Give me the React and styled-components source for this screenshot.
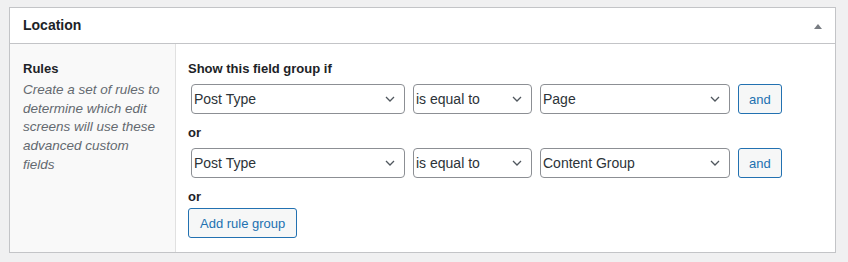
import React from "react";
import styled, { createGlobalStyle } from "styled-components";

const GlobalStyle = createGlobalStyle`
  body {
    margin: 0;
    background: #f0f0f1;
    font-family: "Liberation Sans", Arial, sans-serif;
    color: #1d2327;
  }
`;

const Page = styled.div`
  padding: 7px 12px 9px 9px;
`;

const Postbox = styled.div`
  background: #fff;
  border: 1px solid #c3c4c7;
`;

const PostboxHeader = styled.div`
  display: flex;
  align-items: center;
  justify-content: space-between;
  padding: 8px 13px 8px 13px;
  border-bottom: 1px solid #c3c4c7;
`;

const Title = styled.h2`
  margin: 0;
  font-size: 14px;
  line-height: 19px;
  font-weight: 700;
  color: #1d2327;
`;

const Toggle = styled.span`
  width: 0;
  height: 0;
  border-left: 4px solid transparent;
  border-right: 4px solid transparent;
  border-bottom: 5px solid #787c82;
  margin-top: 1px;
`;

const Body = styled.div`
  display: flex;
`;

const LabelCol = styled.div`
  width: 138px;
  flex: none;
  padding: 15px 14px 15px 13px;
  background: #f9f9f9;
  border-right: 1px solid #e1e1e1;
`;

const LabelTitle = styled.div`
  font-size: 13px;
  line-height: 20px;
  font-weight: 700;
`;

const Description = styled.p`
  margin: 2px 0 0;
  font-size: 13.5px;
  line-height: 18.7px;
  font-style: italic;
  color: #646970;
`;

const InputCol = styled.div`
  flex: 1;
  padding: 15px 12px 14px 12px;
`;

const Heading = styled.h4`
  margin: 0;
  font-size: 13px;
  line-height: 20px;
  font-weight: 700;
  color: #1d2327;
`;

const RuleRow = styled.div`
  display: flex;
  gap: 8px;
  margin: 5px 0 9px 3px;
`;

const Select = styled.div`
  box-sizing: border-box;
  display: flex;
  align-items: center;
  justify-content: space-between;
  width: ${(p) => p.$w}px;
  height: 30px;
  padding: 0 9px 0 2px;
  border: 1px solid #8c8f94;
  border-radius: 4px;
  background: #fff;
  font-size: 14px;
  color: #2c3338;
`;

const Button = styled.button`
  box-sizing: border-box;
  height: 30px;
  padding: 0 ${(p) => (p.$wide ? 11 : 10)}px;
  margin-top: ${(p) => (p.$wide ? 1 : 0)}px;
  border: 1px solid #2271b1;
  border-radius: 3px;
  background: #f6f7f7;
  color: #2271b1;
  font-family: "Liberation Sans", Arial, sans-serif;
  font-size: 13px;
  cursor: pointer;
`;

const Chevron = () => (
  <svg width="10" height="6" viewBox="0 0 10 6">
    <path d="M1 1l4 4 4-4" fill="none" stroke="#50575e" strokeWidth="1.3" />
  </svg>
);

const rules = [
  ["Post Type", "is equal to", "Page"],
  ["Post Type", "is equal to", "Content Group"],
];

function Rule({ values }) {
  const widths = [214, 119, 190];
  return (
    <RuleRow>
      {values.map((v, i) => (
        <Select key={i} $w={widths[i]}>
          <span>{v}</span>
          <Chevron />
        </Select>
      ))}
      <Button>and</Button>
    </RuleRow>
  );
}

export default function App() {
  return (
    <Page>
      <GlobalStyle />
      <Postbox>
        <PostboxHeader>
          <Title>Location</Title>
          <Toggle />
        </PostboxHeader>
        <Body>
          <LabelCol>
            <LabelTitle>Rules</LabelTitle>
            <Description>
              Create a set of rules to determine which edit screens will use
              these advanced custom fields
            </Description>
          </LabelCol>
          <InputCol>
            <Heading>Show this field group if</Heading>
            {rules.map((r, i) => (
              <React.Fragment key={i}>
                {i > 0 && <Heading>or</Heading>}
                <Rule values={r} />
              </React.Fragment>
            ))}
            <Heading>or</Heading>
            <Button $wide>Add rule group</Button>
          </InputCol>
        </Body>
      </Postbox>
    </Page>
  );
}
